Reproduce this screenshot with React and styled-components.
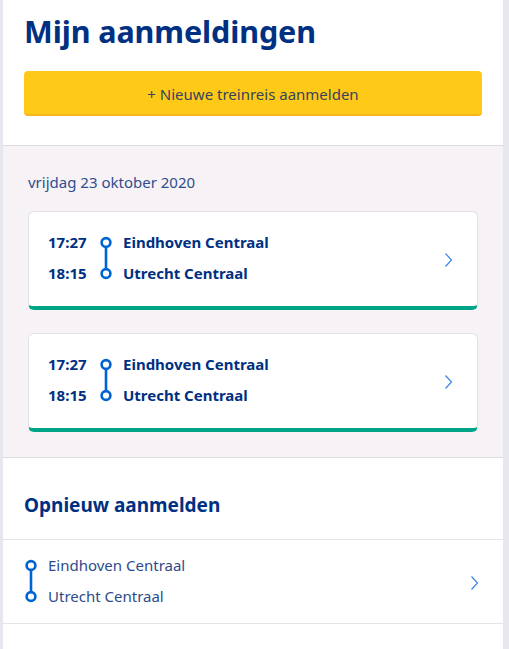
import React from 'react';
import styled, { createGlobalStyle } from 'styled-components';

const GlobalStyle = createGlobalStyle`
    body {
        margin: 0;
        background: #e6e6ef;
        font-family: "Noto Sans", "Open Sans", sans-serif;
    }
`;

const Page = styled.div`
    width: 500px;
    margin-left: 3px;
    min-height: 649px;
    background: #fff;
`;

const Header = styled.div`
    padding: 12px 21px 29px;
    border-bottom: 1px solid #dcdbe2;
`;

const Title = styled.h1`
    margin: 0 0 21px;
    font-size: 30.5px;
    line-height: 38px;
    font-weight: 700;
    color: #003082;
    letter-spacing: -0.1px;
`;

const AddButton = styled.button`
    display: block;
    width: 100%;
    height: 45px;
    border: none;
    border-bottom: 2px solid #f7b51c;
    border-radius: 4px;
    background: #ffc917;
    color: #35435f;
    font-family: inherit;
    font-size: 15px;
    padding: 2px 0 0;
`;

const DaySection = styled.div`
    background: #f6f2f5;
    padding: 26px 25px 25px;
    border-bottom: 1px solid #dcdbe2;
`;

const DateLabel = styled.div`
    font-size: 15px;
    line-height: 20px;
    color: #2f4e8e;
    margin-bottom: 19px;
`;

const CardList = styled.div`
    display: flex;
    flex-direction: column;
    gap: 23px;
`;

const Card = styled.div`
    display: flex;
    align-items: center;
    background: #fff;
    border: 1px solid #e2e1e8;
    border-bottom: 4px solid #00a587;
    border-radius: 6px;
    padding: 15px 24px 17px 19px;
`;

const Times = styled.div`
    display: flex;
    flex-direction: column;
    width: 51px;
`;

const Line = styled.div`
    height: 31px;
    line-height: 31px;
    font-size: 15px;
    font-weight: ${(p) => (p.$bold ? 700 : 400)};
    color: ${(p) => (p.$bold ? '#003082' : '#2d4b8c')};
    white-space: nowrap;
`;

const Stops = styled.div`
    display: flex;
    flex-direction: column;
    flex: 1;
`;

const RouteIcon = styled.svg`
    flex: none;
    display: block;
    margin-right: ${(p) => p.$gap}px;
`;

const Chevron = styled.svg`
    flex: none;
    display: block;
    margin-top: 4px;
`;

const AgainSection = styled.div`
    padding-top: 34px;
`;

const SectionTitle = styled.h2`
    margin: 0 0 21px 21px;
    font-size: 19px;
    line-height: 26px;
    font-weight: 700;
    color: #003082;
`;

const Row = styled.div`
    display: flex;
    align-items: center;
    border-top: 1px solid #e3e3ea;
    border-bottom: 1px solid #e3e3ea;
    padding: 10px 24px 11px 21px;
`;

const RouteGlyph = ({ gap }) => (
    <RouteIcon $gap={ gap } width="14" height="44" viewBox="0 0 14 44">
        <line x1="7" y1="11" x2="7" y2="33" stroke="#0063d3" strokeWidth="2.6" />
        <circle cx="7" cy="6.5" r="4.4" fill="#fff" stroke="#0063d3" strokeWidth="2.6" />
        <circle cx="7" cy="37.5" r="4.4" fill="#fff" stroke="#0063d3" strokeWidth="2.6" />
    </RouteIcon>
);

const ChevronRight = () => (
    <Chevron width="9" height="16" viewBox="0 0 9 16">
        <polyline points="1.5,1.5 7.5,8 1.5,14.5" fill="none" stroke="#3a86e3" strokeWidth="1.2" />
    </Chevron>
);

const trips = [
    { dep: '17:27', arr: '18:15', from: 'Eindhoven Centraal', to: 'Utrecht Centraal' },
    { dep: '17:27', arr: '18:15', from: 'Eindhoven Centraal', to: 'Utrecht Centraal' }
];

const App = () => {
    const cards = trips.map((trip, ix) => (
        <Card key={ ix }>
            <Times>
                <Line $bold>{ trip.dep }</Line>
                <Line $bold>{ trip.arr }</Line>
            </Times>
            <RouteGlyph gap={ 10 } />
            <Stops>
                <Line $bold>{ trip.from }</Line>
                <Line $bold>{ trip.to }</Line>
            </Stops>
            <ChevronRight />
        </Card>
    ));

    return (
        <>
            <GlobalStyle />
            <Page>
                <Header>
                    <Title>Mijn aanmeldingen</Title>
                    <AddButton>+ Nieuwe treinreis aanmelden</AddButton>
                </Header>
                <DaySection>
                    <DateLabel>vrijdag 23 oktober 2020</DateLabel>
                    <CardList>{ cards }</CardList>
                </DaySection>
                <AgainSection>
                    <SectionTitle>Opnieuw aanmelden</SectionTitle>
                    <Row>
                        <RouteGlyph gap={ 10 } />
                        <Stops>
                            <Line>Eindhoven Centraal</Line>
                            <Line>Utrecht Centraal</Line>
                        </Stops>
                        <ChevronRight />
                    </Row>
                </AgainSection>
            </Page>
        </>
    );
};

export default App;
